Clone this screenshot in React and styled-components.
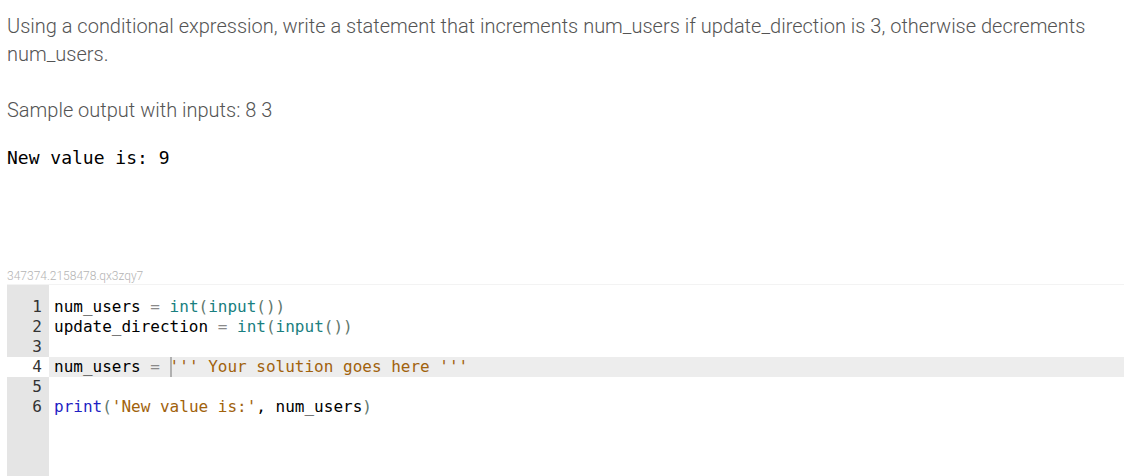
import styled, { createGlobalStyle } from 'styled-components'

const GlobalStyle = createGlobalStyle`
  body {
    margin: 0;
    background: #ffffff;
    overflow: hidden;
  }
`

const Page = styled.div`
  padding: 12px 0 0 7px;
  font-family: Roboto, "Liberation Sans", sans-serif;
`

const Prompt = styled.p`
  margin: 0;
  font-weight: 300;
  font-size: 20px;
  line-height: 28px;
  color: #545454;
`

const SampleLabel = styled(Prompt)`
  margin-top: 28px;
`

const Output = styled.pre`
  margin: 22px 0 0;
  font-family: "DejaVu Sans Mono", "Liberation Mono", monospace;
  font-size: 18px;
  line-height: 24px;
  color: #000000;
`

const EditorId = styled.div`
  margin-top: 98px;
  font-weight: 300;
  font-size: 12px;
  line-height: 16px;
  color: #b4b4b4;
`

const Editor = styled.div`
  display: flex;
  height: 200px;
  border-top: 1px solid #f3f3f3;
  font-family: "DejaVu Sans Mono", "Liberation Mono", monospace;
  font-size: 16px;
  line-height: 20px;
`

const Gutter = styled.div`
  width: 42px;
  flex-shrink: 0;
  padding-top: 12px;
  background: #e5e5e5;
`

const LineNo = styled.div`
  height: 20px;
  padding-right: 7px;
  text-align: right;
  color: #333333;
  background: ${(p) => (p.$active ? '#ffffff' : 'transparent')};
`

const Code = styled.div`
  flex: 1;
  padding-top: 12px;
`

const Line = styled.div`
  height: 20px;
  padding-left: 5px;
  white-space: pre;
  color: #000000;
  background: ${(p) => (p.$active ? '#ededed' : 'transparent')};
`

const Tok = styled.span`
  color: ${(p) => p.$c};
`

const Cursor = styled.span`
  display: inline-block;
  width: 2px;
  height: 20px;
  margin-right: -2px;
  vertical-align: top;
  background: #b0b0b0;
`

const OP = '#8a8a8a'
const BUILTIN = '#1a7f80'
const BRACKET = '#62786e'
const STR = '#a1620c'
const KW = '#1f1fc4'

export default function App() {
  return (
    <Page>
      <GlobalStyle />
      <Prompt>
        Using a conditional expression, write a statement that increments num_users if update_direction is 3, otherwise decrements num_users.
      </Prompt>
      <SampleLabel>Sample output with inputs: 8 3</SampleLabel>
      <Output>New value is: 9</Output>
      <EditorId>347374.2158478.qx3zqy7</EditorId>
      <Editor>
        <Gutter>
          <LineNo>1</LineNo>
          <LineNo>2</LineNo>
          <LineNo>3</LineNo>
          <LineNo $active>4</LineNo>
          <LineNo>5</LineNo>
          <LineNo>6</LineNo>
        </Gutter>
        <Code>
          <Line>
            num_users <Tok $c={OP}>=</Tok> <Tok $c={BUILTIN}>int</Tok><Tok $c={BRACKET}>(</Tok><Tok $c={BUILTIN}>input</Tok><Tok $c={BRACKET}>())</Tok>
          </Line>
          <Line>
            update_direction <Tok $c={OP}>=</Tok> <Tok $c={BUILTIN}>int</Tok><Tok $c={BRACKET}>(</Tok><Tok $c={BUILTIN}>input</Tok><Tok $c={BRACKET}>())</Tok>
          </Line>
          <Line> </Line>
          <Line $active>
            num_users <Tok $c={OP}>=</Tok> <Cursor /><Tok $c={STR}>''' Your solution goes here '''</Tok>
          </Line>
          <Line> </Line>
          <Line>
            <Tok $c={KW}>print</Tok><Tok $c={BRACKET}>(</Tok><Tok $c={STR}>'New value is:'</Tok>, num_users<Tok $c={BRACKET}>)</Tok>
          </Line>
        </Code>
      </Editor>
    </Page>
  )
}
